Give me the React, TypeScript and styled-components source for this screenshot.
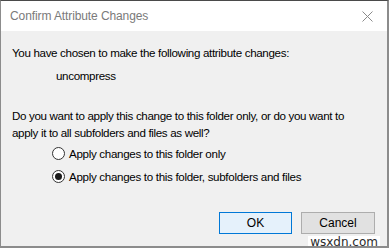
import React from "react";
import styled, { createGlobalStyle } from "styled-components";

const Global = createGlobalStyle`
  html, body { margin: 0; padding: 0; background: #ffffff; }
  body { font-family: "Liberation Sans", Arial, sans-serif; }
  * { box-sizing: border-box; }
`;

const Window = styled.div`
  position: relative;
  width: 389px;
  height: 248px;
  display: flex;
  flex-direction: column;
  border-top: 1px solid #4a4a4a;
  border-left: 1px solid #8c8c8c;
  border-right: 2px solid #8c8c8c;
  border-bottom: 2px solid #8c8c8c;
  background: #f0f0f0;
  overflow: hidden;
`;

const TitleBar = styled.div`
  height: 30px;
  flex: none;
  background: #ffffff;
  display: flex;
  align-items: center;
  justify-content: space-between;
  padding: 0 14px 0 9px;
`;

const Title = styled.span`
  font-size: 12px;
  color: #7a7a7a;
  letter-spacing: -0.1px;
`;

const Close = styled.svg`
  width: 11px;
  height: 11px;
`;

const Body = styled.div`
  flex: 1;
  display: flex;
  flex-direction: column;
  padding: 13px 12px 0 11px;
  font-size: 11.6px;
  color: #000;
`;

const Line = styled.p<{ $indent?: number; $top?: number }>`
  margin: ${(p) => p.$top ?? 0}px 0 0 ${(p) => p.$indent ?? 0}px;
  line-height: 17px;
  letter-spacing: -0.34px;
`;

const Options = styled.div`
  display: flex;
  flex-direction: column;
  gap: 6px;
  margin: 4px 0 0 40px;
`;

const Option = styled.label`
  display: flex;
  align-items: center;
  gap: 4px;
  height: 17px;
  letter-spacing: -0.32px;
`;

const Radio = styled.span<{ $checked?: boolean }>`
  width: 13px;
  height: 13px;
  border-radius: 50%;
  border: 1px solid #333;
  background: #fff;
  display: flex;
  align-items: center;
  justify-content: center;
  &::after {
    content: "";
    width: 7px;
    height: 7px;
    border-radius: 50%;
    background: ${(p) => (p.$checked ? "#1a1a1a" : "transparent")};
  }
`;

const Buttons = styled.div`
  display: flex;
  justify-content: flex-end;
  gap: 9px;
  margin-top: 27px;
`;

const Button = styled.button<{ $primary?: boolean }>`
  width: ${(p) => (p.$primary ? 73 : 74)}px;
  height: 22px;
  font-family: inherit;
  font-size: 12px;
  color: #000;
  border: 1px solid ${(p) => (p.$primary ? "#0078d7" : "#adadad")};
  background: ${(p) => (p.$primary ? "#e5f1fb" : "#e1e1e1")};
  padding: 0;
`;

const Watermark = styled.span`
  position: absolute;
  right: 7px;
  bottom: -2px;
  background: #fff;
  color: #2b2b2b;
  font-family: "DejaVu Sans", sans-serif;
  font-size: 12px;
  line-height: 12px;
  padding: 0 2px;
`;

export default function App() {
  return (
    <>
      <Global />
      <Window>
        <TitleBar>
          <Title>Confirm Attribute Changes</Title>
          <Close viewBox="0 0 11 11">
            <path d="M0.5 0.5 L10.5 10.5 M10.5 0.5 L0.5 10.5" stroke="#8a8a8a" strokeWidth="1" fill="none" />
          </Close>
        </TitleBar>
        <Body>
          <Line>You have chosen to make the following attribute changes:</Line>
          <Line $indent={44} $top={6}>uncompress</Line>
          <Line $top={23}>
            Do you want to apply this change to this folder only, or do you want to
            <br />
            apply it to all subfolders and files as well?
          </Line>
          <Options>
            <Option>
              <Radio />
              Apply changes to this folder only
            </Option>
            <Option>
              <Radio $checked />
              Apply changes to this folder, subfolders and files
            </Option>
          </Options>
          <Buttons>
            <Button $primary>OK</Button>
            <Button>Cancel</Button>
          </Buttons>
        </Body>
        <Watermark>wsxdn.com</Watermark>
      </Window>
    </>
  );
}
